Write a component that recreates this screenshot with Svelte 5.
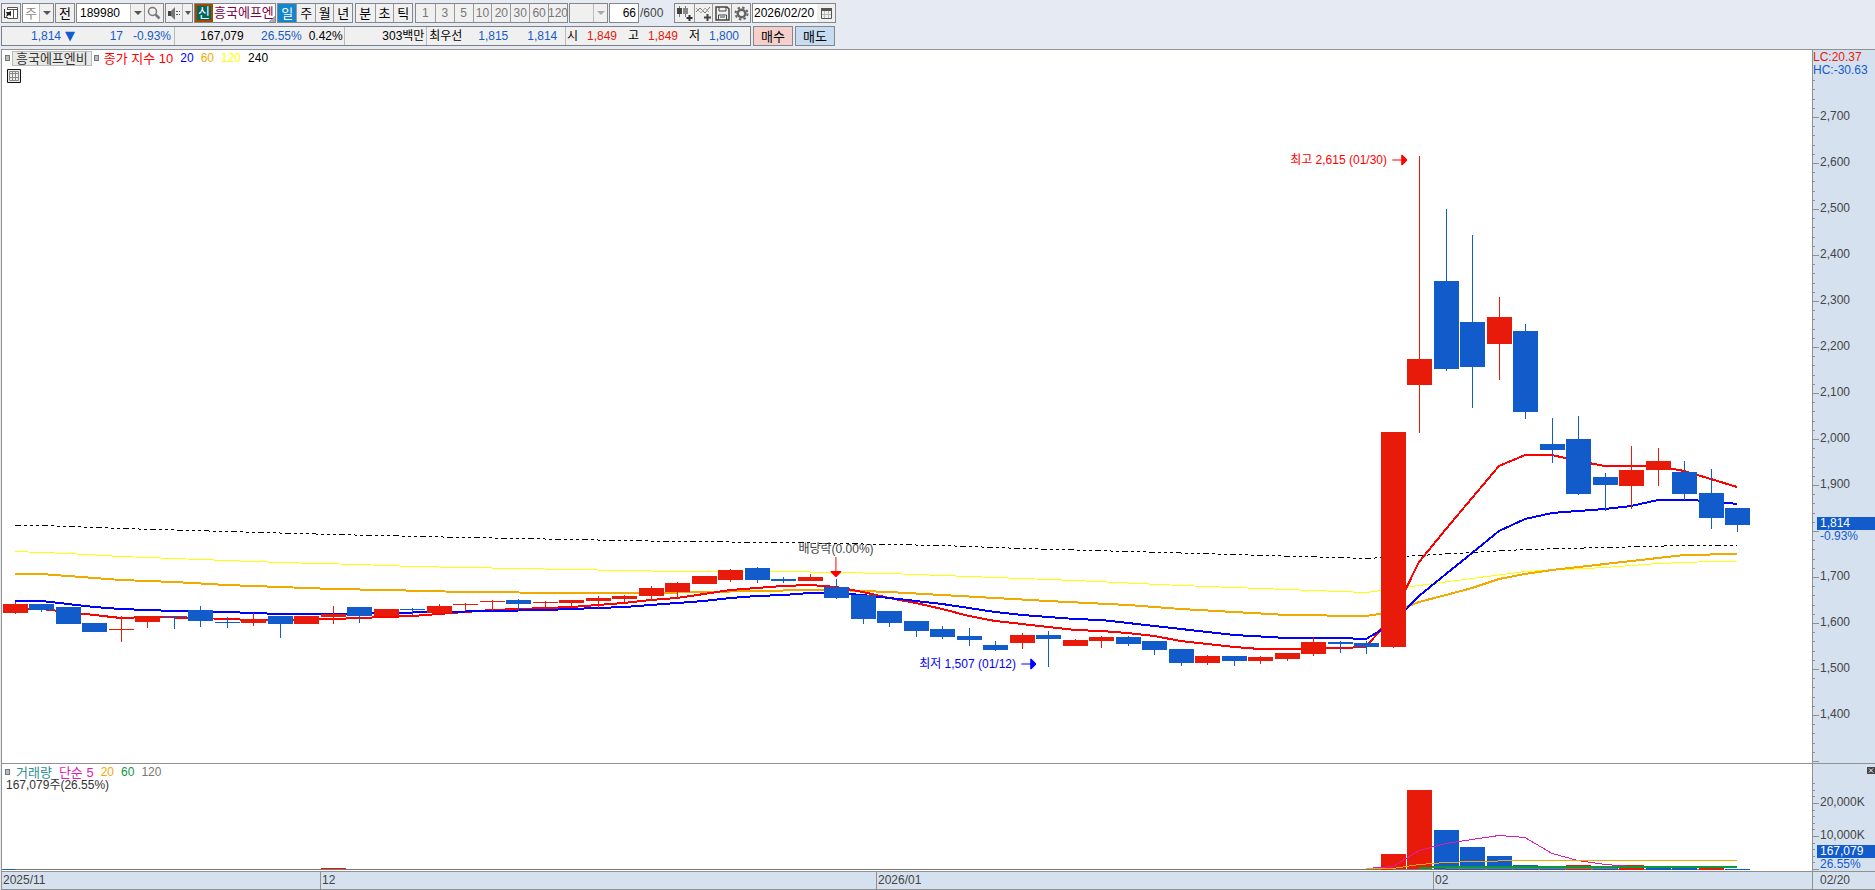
<script lang="ts">
	type Candle = [high: number, top: number, bottom: number, low: number, up: 0 | 1];
	type Point = [index: number, y: number];

	// plot area in drawing units
	const PLOT = { x: 2, width: 1810 };
	const PRICE = { y: 50, height: 713 };
	const VOLUME = { y: 764, height: 107 };
	const STEP = 26.5;

	const candles: Candle[] = [
		[602, 604, 613, 614, 1], [604, 604, 610, 612, 0], [607, 607, 624, 624, 0], [623, 623, 632, 632, 0],
		[616, 629, 630, 642, 1], [616, 616, 622, 628, 1], [616, 616, 617, 629, 0], [606, 610, 621, 627, 0],
		[617, 622, 623, 628, 0], [613, 619, 623, 626, 1], [616, 616, 624, 638, 0], [616, 616, 624, 624, 1],
		[606, 614, 617, 624, 1], [607, 607, 616, 623, 0], [609, 609, 616, 616, 1], [608, 609, 610, 615, 0],
		[604, 606, 613, 613, 1], [603, 604, 605, 611, 1], [600, 601, 602, 611, 1], [599, 600, 604, 610, 0],
		[601, 602, 603, 608, 1], [600, 600, 603, 606, 1], [596, 598, 601, 608, 1], [595, 596, 599, 603, 1],
		[586, 588, 596, 600, 1], [582, 583, 592, 598, 1], [576, 576, 584, 584, 1], [569, 570, 580, 582, 1],
		[567, 568, 580, 583, 0], [577, 579, 581, 583, 0], [574, 577, 581, 581, 1], [579, 587, 598, 599, 0],
		[595, 595, 619, 624, 0], [611, 611, 623, 627, 0], [621, 621, 631, 637, 0], [626, 629, 637, 639, 0],
		[628, 636, 640, 646, 0], [641, 645, 650, 651, 0], [633, 635, 643, 649, 1], [631, 635, 639, 667, 0],
		[639, 640, 646, 646, 1], [636, 637, 641, 648, 1], [636, 637, 644, 646, 0], [641, 641, 650, 655, 0],
		[649, 649, 663, 666, 0], [655, 656, 663, 665, 1], [656, 656, 661, 666, 0], [656, 657, 661, 664, 1],
		[653, 653, 659, 661, 1], [637, 642, 654, 656, 1], [641, 642, 644, 653, 0], [641, 643, 647, 654, 0],
		[432, 432, 647, 648, 1], [156, 359, 385, 433, 1], [209, 281, 369, 371, 0], [235, 322, 367, 408, 0],
		[297, 317, 344, 380, 1], [324, 331, 412, 419, 0], [418, 444, 450, 463, 0], [416, 439, 494, 495, 0],
		[473, 477, 485, 511, 0], [446, 470, 486, 509, 1], [448, 461, 470, 486, 1], [461, 472, 494, 500, 0],
		[469, 493, 518, 529, 0], [508, 508, 525, 532, 0]
	];

	// 이동평균선
	const ma10: Point[] = [
		[0, 608], [1, 609], [2, 612], [3, 615], [4, 618], [5, 617], [7, 618], [9, 620], [11, 620], [12, 619],
		[13, 618], [14, 617], [15, 616], [16, 614], [17, 612], [18, 610], [20, 608], [21, 607], [22, 605],
		[23, 603], [24, 600], [25, 598], [26, 594], [27, 590], [28, 588], [29, 586], [30, 585], [31, 587],
		[32, 592], [33, 598], [34, 603], [35, 609], [36, 616], [37, 621], [38, 624], [39, 627], [40, 630],
		[41, 631], [42, 633], [43, 636], [44, 641], [45, 644], [46, 647], [47, 649], [49, 649], [50, 648],
		[51, 647], [52, 615], [53, 562], [54, 529], [55, 498], [56, 466], [57, 455], [58, 455], [59, 461],
		[60, 466], [62, 466], [63, 471], [64, 479], [65, 487]
	];
	const ma20: Point[] = [
		[0, 601], [1, 601], [2, 604], [3, 607], [4, 609], [5, 610], [6, 611], [8, 612], [10, 614], [12, 614],
		[14, 613], [16, 612], [18, 611], [20, 610], [21, 609], [22, 608], [23, 607], [24, 605], [25, 603],
		[26, 601], [27, 598], [28, 596], [29, 595], [30, 593], [31, 593], [32, 595], [33, 598], [34, 601],
		[35, 604], [36, 608], [37, 612], [38, 615], [40, 619], [41, 620], [42, 623], [44, 629], [46, 635],
		[48, 638], [50, 638], [51, 639], [52, 623], [53, 596], [54, 574], [55, 553], [56, 531], [57, 519],
		[58, 513], [59, 511], [60, 509], [61, 506], [62, 500], [63, 500], [64, 501], [65, 504]
	];
	const ma60: Point[] = [
		[0, 574], [1, 574], [2, 576], [4, 580], [6, 582], [8, 585], [10, 587], [12, 589], [14, 590], [17, 592],
		[21, 593], [24, 593], [26, 592], [28, 591], [30, 590], [31, 590], [33, 592], [35, 595], [37, 598],
		[39, 601], [42, 605], [44, 609], [46, 612], [48, 615], [51, 616], [52, 612], [53, 602], [54, 595],
		[55, 588], [56, 579], [57, 574], [58, 570], [60, 564], [62, 558], [63, 555], [65, 554]
	];
	const ma120: Point[] = [
		[0, 551], [2, 553], [4, 556], [6, 558], [8, 560], [10, 562], [13, 564], [15, 566], [19, 568], [23, 570],
		[25, 571], [29, 571], [33, 573], [36, 576], [40, 580], [44, 585], [48, 589], [51, 592], [53, 585],
		[55, 578], [57, 571], [60, 567], [62, 563], [64, 561], [65, 561]
	];
	const ma240: Point[] = [
		[0, 525], [1, 525], [4, 528], [8, 531], [12, 534], [17, 537], [25, 541], [29, 542], [31, 543],
		[35, 545], [38, 548], [42, 551], [46, 554], [51, 558], [53, 555], [55, 552], [57, 549], [60, 547],
		[63, 545], [65, 545]
	];
	const priceLines = [
		{ name: 'ma240', points: ma240, width: 1 },
		{ name: 'ma120', points: ma120, width: 1 },
		{ name: 'ma60', points: ma60, width: 2 },
		{ name: 'ma10', points: ma10, width: 2 },
		{ name: 'ma20', points: ma20, width: 2 }
	];

	// 거래량
	const volumes = [
		{ index: 52, top: 854, up: true },
		{ index: 53, top: 790, up: true },
		{ index: 54, top: 830, up: false },
		{ index: 55, top: 847, up: false },
		{ index: 56, top: 856, up: false },
		{ index: 57, top: 865, up: false },
		{ index: 58, top: 867, up: false },
		{ index: 59, top: 865, up: true },
		{ index: 60, top: 867, up: false },
		{ index: 61, top: 865, up: true },
		{ index: 62, top: 867, up: false },
		{ index: 63, top: 867, up: false },
		{ index: 64, top: 867, up: true },
		{ index: 65, top: 869, up: false }
	];
	const volumeLines: { name: string; points: Point[]; width: number }[] = [
		{
			name: 'vol5',
			points: [[51, 868], [52, 866], [53, 850], [54, 843], [55, 839], [56, 835], [57, 837], [58, 853], [59, 860], [60, 864], [61, 866], [65, 867]],
			width: 1
		},
		{ name: 'vol20', points: [[51, 868], [52, 868], [53, 864], [54, 862], [55, 861], [57, 860], [65, 860]], width: 1 },
		{ name: 'vol120', points: [[52, 869], [56, 868], [65, 867]], width: 1 },
		{ name: 'vol60', points: [[53, 868], [54, 867], [55, 867], [65, 867]], width: 2 }
	];

	const centerX = (index: number) => Math.floor(15.3 + index * STEP);
	const priceY = (price: number) => 163 + (2600 - price) * 0.46;
	const volumeY = (k: number) => 869 - k * 0.0033;
	// odd widths sit on the pixel centre
	const toPoints = (points: Point[], width: number) =>
		points.map(([i, y]) => `${centerX(i)},${y + (width % 2) / 2}`).join(' ');

	const left = (x: number) => `${((x - PLOT.x) / PLOT.width) * 100}%`;
	const top = (y: number, pane = PRICE) => `${((y - pane.y) / pane.height) * 100}%`;

	const priceLabels = Array.from({ length: 14 }, (_, i) => 2700 - i * 100).filter((p) => p !== 1800);
	const priceTicks = Array.from({ length: 75 }, (_, i) => 2780 - i * 20);
	const volumeTicks = Array.from({ length: 14 }, (_, i) => i * 2000);
	const volumeLabels = [20000, 10000];

	const periods = ['일', '주', '월', '년'];
	const intradays = ['분', '초', '틱'];
	const minutes = ['1', '3', '5', '10', '20', '30', '60', '120'];
	let period = '일';

	const months = [
		{ text: '2025/11', x: 2 },
		{ text: '12', x: 320 },
		{ text: '2026/01', x: 876 },
		{ text: '02', x: 1433 }
	];
</script>

<div class="page">
	<header>
		<div class="toolbar">
			<button type="button" class="box square" aria-label="메뉴">
				<svg width="16" height="16" viewBox="0 0 16 16">
					<path d="M4 2h11v12H4z" fill="#fff" />
					<path d="M4.500 5V2.500h10v11h-10V12M5 4.500h9.500M10.500 5v8.500" fill="none" stroke="#555" />
					<path d="M1.500 4v8M1 12.500h3" stroke="#333" fill="none" />
					<path d="M3 12l1-3-1-2h3l2-1v5l-2-1z" fill="#222" />
				</svg>
			</button>
			<div class="group">
				<select class="light" aria-label="주기 선택">
					<option>주</option>
				</select>
				<span class="drop"><i class="caret"></i></span>
			</div>
			<button type="button" class="box square">전</button>
			<div class="group code">
				<input type="text" value="189980" aria-label="종목코드" />
				<button type="button" class="drop" aria-label="종목 목록"><i class="caret"></i></button>
				<button type="button" aria-label="검색">
					<svg width="16" height="16" viewBox="0 0 16 16" fill="none" stroke="#777">
						<circle cx="6.500" cy="6.500" r="4" stroke-width="1.500" />
						<path d="M9.500 9.500l4 4" stroke-width="2.500" />
					</svg>
				</button>
			</div>
			<div class="group">
				<button type="button" class="sound" aria-label="소리">
					<svg width="16" height="16" viewBox="0 0 16 16">
						<path d="M2 6h3v5H2z" fill="#444" />
						<path d="M5 6l4-4v13l-4-4z" fill="#777" />
						<path d="M10 6.500h4M10 9.500h4" stroke="#555" stroke-dasharray="2 1" />
					</svg>
				</button>
				<button type="button" class="drop slim" aria-label="소리 설정"><i class="caret"></i></button>
			</div>
			<div class="group name">
				<span class="credit">신</span>
				<span class="stock">흥국에프엔</span>
			</div>
			<div class="group periods">
				{#each periods as p (p)}
					<button type="button" class:selected={period === p} on:click={() => (period = p)}>{p}</button>
				{/each}
			</div>
			<div class="group intradays">
				{#each intradays as p (p)}
					<button type="button" class:selected={period === p} on:click={() => (period = p)}>{p}</button>
				{/each}
			</div>
			<div class="group minutes">
				{#each minutes as m (m)}
					<button type="button" disabled>{m}</button>
				{/each}
			</div>
			<div class="group empty">
				<select class="blank" disabled aria-label="주기 값"></select>
				<span class="drop"><i class="caret"></i></span>
			</div>
			<div class="count">
				<input type="text" value="66" aria-label="표시 개수" />
				<span>/600</span>
			</div>
			<div class="group tools">
				<button type="button" aria-label="지표 추가">
					<svg width="17" height="17" viewBox="0 0 17 17">
						<path d="M3.500 1v11M9.500 1v11" stroke="#777" />
						<path d="M1 3h5v6H1z" fill="#444" />
						<path d="M7 3h5v6H7z" fill="#888" />
						<path d="M13.500 10v6M10.500 13h6" stroke="#333" stroke-width="2" />
					</svg>
				</button>
				<button type="button" aria-label="선 추가">
					<svg width="17" height="17" viewBox="0 0 17 17" fill="none">
						<path d="M1 7l4-4 5 5 5-6" stroke="#777" />
						<path d="M1 3l5 5 4-5 4 4" stroke="#aaa" />
						<path d="M12.500 9v7M9 12.500h7" stroke="#444" stroke-width="2" />
					</svg>
				</button>
				<button type="button" aria-label="저장">
					<svg width="17" height="17" viewBox="0 0 17 17" fill="none" stroke="#444">
						<path d="M2 2h11l2 2v11H2z" stroke-width="1.500" />
						<path d="M5 2v4h7V2M4.500 15v-5h8v5M6 12h5" />
					</svg>
				</button>
				<button type="button" aria-label="설정">
					<svg width="17" height="17" viewBox="0 0 17 17" fill="none" stroke="#666">
						<circle cx="8.500" cy="8.500" r="3.800" stroke-width="2.500" />
						<circle cx="8.500" cy="8.500" r="6" stroke-width="2" stroke-dasharray="2.400 2.310" />
					</svg>
				</button>
			</div>
			<div class="group date">
				<input type="text" value="2026/02/20" aria-label="날짜" />
				<button type="button" class="cal" aria-label="달력">
					<svg width="13" height="13" viewBox="0 0 13 13" fill="none" stroke="#555">
						<path d="M1 2.500h11" stroke-width="3" />
						<path d="M4.500 4v7M8.500 4v7M2 7.500h9" stroke="#bbb" />
						<path d="M1.500 3v8.500h10V3" />
					</svg>
				</button>
			</div>
		</div>

		<div class="quote">
			<div class="prices">
				<div class="cells first">
					<span class="down">1,814</span><span class="down mark">▼</span><span class="down diff">17</span>
					<span class="down rate">-0.93%</span>
				</div>
				<div class="cells second">
					<span>167,079</span><span class="down">26.55%</span><span>0.42%</span>
				</div>
				<div class="cells third"><span>303백만</span></div>
				<div class="cells fourth"><b>최우선</b><span class="down">1,815</span><span class="down">1,814</span></div>
				<div class="cells fifth">
					<b>시</b><span class="up">1,849</span><b>고</b><span class="up">1,849</span><b>저</b><span
						class="down">1,800</span
					>
				</div>
			</div>
			<button type="button" class="trade buy">매수</button>
			<button type="button" class="trade sell">매도</button>
		</div>
	</header>

	<main>
		<section class="plot">
			<svg class="drawing" viewBox="2 50 1810 713" preserveAspectRatio="none" aria-label="가격 차트">
				{#each priceLines as line (line.name)}
					<polyline class={line.name} points={toPoints(line.points, line.width)} />
				{/each}
				{#each candles as [high, bodyTop, bodyBottom, low, up], i (i)}
					<g class={up ? 'rise' : 'fall'}>
						<rect x={centerX(i)} y={high} width="1" height={low - high} />
						<rect x={centerX(i) - 12} y={bodyTop} width="25" height={bodyBottom - bodyTop} />
					</g>
				{/each}
			</svg>
			<div class="legend">
				<i class="dot"></i><span class="chip">흥국에프엔비</span><i class="dot"></i>
				<span class="c10">종가 지수 10</span><span class="c20">20</span><span class="c60">60</span>
				<span class="c120">120</span><span>240</span>
			</div>
			<button type="button" class="grid-icon" aria-label="표 보기">
				<svg width="14" height="14" viewBox="0 0 14 14" fill="none">
					<path d="M.5.5h13v13H.5z" fill="#eee" stroke="#111" />
					<path d="M2.500 2.500h9v9h-9zM5.500 2v10M8.500 2v10M2 4.500h10M2 8.500h10" stroke="#888" />
				</svg>
			</button>
			<div class="note high" style:left={left(1407)} style:top={top(160)}>
				<span>최고 2,615 (01/30)</span>
				<svg width="15" height="11" viewBox="0 0 15 11"><path d="M0 5h9V0h1l5 5v1l-5 5H9V6H0z" /></svg>
			</div>
			<div class="note low" style:left={left(1036)} style:top={top(664)}>
				<span>최저 1,507 (01/12)</span>
				<svg width="15" height="11" viewBox="0 0 15 11"><path d="M0 5h9V0h1l5 5v1l-5 5H9V6H0z" /></svg>
			</div>
			<div class="note event" style:left={left(836)} style:top={top(543)}>
				<span>배당락(0.00%)</span>
				<svg width="11" height="20" viewBox="0 0 11 20"><path d="M5 0h1v14h5v1l-5 5H5l-5-5v-1h5z" /></svg>
			</div>
		</section>
		<aside class="axis">
			{#each priceTicks as p (p)}
				<i class="tick" class:major={p % 100 === 0} style:top={top(priceY(p))}></i>
			{/each}
			{#each priceLabels as p (p)}
				<span class="label" style:top={top(priceY(p) - 1)}>{p.toLocaleString('en-US')}</span>
			{/each}
			<div class="extremes"><span class="up">LC:20.37</span><span class="down">HC:-30.63</span></div>
			<div class="current" style:top={top(517)}><span>1,814</span><span class="down">-0.93%</span></div>
		</aside>

		<section class="plot">
			<svg class="drawing" viewBox="2 764 1810 107" preserveAspectRatio="none" aria-label="거래량 차트">
				<rect x="2" y="869" width="1720" height="1" fill="#777" />
				<rect class="fall" x="3" y="869" width="12" height="1" />
				<rect class="rise" x="321" y="868" width="25" height="1" />
				{#each volumes as v (v.index)}
					<rect class={v.up ? 'rise' : 'fall'} x={centerX(v.index) - 12} y={v.top} width="25" height={870 - v.top} />
				{/each}
				{#each volumeLines as line (line.name)}
					<polyline class={line.name} points={toPoints(line.points, line.width)} />
				{/each}
			</svg>
			<div class="legend volume">
				<i class="dot"></i><span class="v-title">거래량</span><span class="v5">단순 5</span>
				<span class="c60">20</span><span class="v60">60</span><span class="v120">120</span>
			</div>
			<div class="amount">167,079주(26.55%)</div>
		</section>
		<aside class="axis">
			{#each volumeTicks as k (k)}
				<i class="tick" class:major={k % 10000 === 0} style:top={top(volumeY(k), VOLUME)}></i>
			{/each}
			{#each volumeLabels as k (k)}
				<span class="label" style:top={top(volumeY(k) - 1, VOLUME)}>{k.toLocaleString('en-US')}K</span>
			{/each}
			<button type="button" class="close" aria-label="닫기">
				<svg width="8" height="7" viewBox="0 0 8 7"><path d="M2 1.500l4 4M6 1.500l-4 4" stroke="#fff" /></svg>
			</button>
			<div class="current" style:top={top(845, VOLUME)}><span>167,079</span><span class="down">26.55%</span></div>
		</aside>

		<section class="dates">
			{#each months as m, i (m.text)}
				<span class:line={i > 0} style:left={left(m.x)}>{m.text}</span>
			{/each}
		</section>
		<aside class="last-date">02/20</aside>
	</main>
</div>

<style>
	:global(body) {
		background: #e6ebf3;
	}
	.page {
		display: flex;
		flex-direction: column;
		height: 100vh;
		min-height: 500px;
		font-family: 'Liberation Sans', 'Noto Sans CJK KR', sans-serif;
		font-size: 12px;
		line-height: 13px;
		color: #000;
		white-space: nowrap;
		overflow: hidden;
	}
	button,
	input,
	select {
		box-sizing: border-box;
		margin: 0;
		padding: 0;
		border: none;
		border-radius: 0;
		background: #f0f0f0;
		font: inherit;
		color: inherit;
	}
	select {
		appearance: none;
	}
	svg {
		display: block;
		flex: none;
	}
	.up {
		color: #e81a0a;
	}
	.down {
		color: #125bcb;
	}

	/* 상단 툴바 */
	header {
		display: flex;
		flex-direction: column;
		gap: 3px;
		height: 46px;
		padding: 3px 0 0 1px;
	}
	.toolbar {
		display: flex;
		gap: 1px;
		height: 20px;
	}
	.box,
	.group {
		box-sizing: border-box;
		display: flex;
		height: 20px;
		border: 1px solid #858789;
		background: #f0f0f0;
	}
	.square {
		align-items: center;
		justify-content: center;
		width: 20px;
		font-size: 13px;
	}
	.group button,
	.drop {
		box-sizing: border-box;
		display: flex;
		align-items: center;
		justify-content: center;
		width: 19px;
	}
	.group button + button {
		border-left: 1px solid #999;
	}
	.group .drop {
		width: 14px;
		border-left: 1px solid #bbb;
	}
	.group .slim {
		width: 10px;
	}
	.light {
		width: 16px;
		padding-left: 2px;
		background: #fff;
		color: #888;
		font-size: 13px;
	}
	.group .sound {
		width: 16px;
	}
	.caret {
		border: 4px solid transparent;
		border-top: 4px solid #555;
		border-bottom: none;
	}
	.slim .caret {
		border-width: 4px 3px 0;
	}
	.group .selected {
		background: #1685c9;
		color: #fff;
	}
	.code input {
		width: 53px;
		padding-left: 3px;
		background: #fff;
	}
	.name {
		width: 82px;
		background: linear-gradient(135deg, #fff 93%, #aaa 93%);
		color: #80004a;
		font-size: 13px;
		overflow: hidden;
	}
	.credit {
		box-sizing: border-box;
		flex: none;
		width: 18px;
		border: 2px solid #a04a00;
		background: #06655f;
		color: #fff;
		line-height: 14px;
		text-align: center;
	}
	.stock {
		padding-left: 1px;
		line-height: 18px;
	}
	.periods {
		width: 76px;
		font-size: 13px;
	}
	.intradays {
		width: 58px;
		margin: 0 1px;
		font-size: 13px;
	}
	.minutes {
		width: 153px;
	}
	.minutes button {
		color: #777;
	}
	.blank {
		width: 23px;
	}
	.empty .caret {
		border-top-color: #aaa;
	}
	.count {
		display: flex;
		align-items: center;
		gap: 1px;
		width: 64px;
		color: #444;
	}
	.count input {
		width: 30px;
		height: 20px;
		padding-right: 2px;
		border: 1px solid #858789;
		background: #fff;
		color: #000;
		text-align: right;
	}
	.tools {
		width: 77px;
	}
	.date input {
		width: 64px;
		padding-left: 1px;
		background: #fff;
	}
	.group .cal {
		width: 18px;
	}

	/* 시세 줄 */
	.quote {
		display: flex;
		gap: 2px;
		height: 20px;
	}
	.prices {
		box-sizing: border-box;
		display: flex;
		width: 750px;
		border: 1px solid #7b7f88;
		background: #f0f0f0;
		line-height: 18px;
	}
	.cells {
		box-sizing: border-box;
		display: flex;
		text-align: right;
	}
	.cells + .cells {
		border-left: 1px solid #bbb;
	}
	.cells b {
		font-weight: normal;
		text-align: left;
	}
	.first {
		width: 172px;
	}
	.first span {
		width: 59px;
	}
	.first .mark {
		width: 14px;
		font-family: 'DejaVu Sans', sans-serif;
		font-size: 13px;
	}
	.first .diff,
	.first .rate {
		width: 48px;
	}
	.second {
		width: 171px;
	}
	.second span {
		width: 69px;
	}
	.second span + span {
		width: 58px;
	}
	.second span + span + span {
		width: 41px;
	}
	.third {
		width: 82px;
	}
	.third span {
		width: 79px;
	}
	.fourth {
		width: 139px;
		padding-left: 2px;
	}
	.fourth b {
		width: 30px;
	}
	.fourth span {
		width: 49px;
	}
	.fifth {
		padding-left: 1px;
	}
	.fifth b {
		width: 20px;
	}
	.fifth span {
		width: 30px;
		margin-right: 11px;
	}
	.trade {
		box-sizing: border-box;
		width: 40px;
		border: 1px solid #858789;
		font-size: 13px;
	}
	.buy {
		background: #f5cfcb;
	}
	.sell {
		background: #c7dcf2;
	}

	/* 차트 */
	main {
		flex: 1;
		display: grid;
		grid-template-columns: 1fr 63px;
		grid-template-rows: minmax(0, 714fr) minmax(0, 108fr) 18px;
		margin-left: 1px;
		border-top: 1px solid #919191;
		border-left: 1px solid #919191;
	}
	.plot,
	.axis,
	.dates,
	.last-date {
		position: relative;
		box-sizing: border-box;
		border-bottom: 1px solid #919191;
	}
	.plot {
		background: #fff;
	}
	.axis,
	.dates,
	.last-date {
		background: #d6e1ef;
		color: #444;
	}
	.axis,
	.last-date {
		border-left: 1px solid #919191;
	}
	.drawing {
		position: absolute;
		width: 100%;
		height: 100%;
		shape-rendering: crispEdges;
	}
	polyline {
		fill: none;
		stroke-width: 1;
		vector-effect: non-scaling-stroke;
	}
	.rise {
		fill: #e81a0a;
	}
	.fall {
		fill: #125bcb;
	}
	.ma10 {
		stroke: #f00;
		stroke-width: 2;
	}
	.ma20 {
		stroke: #00f;
		stroke-width: 2;
	}
	.ma60 {
		stroke: #f0aa00;
		stroke-width: 2;
	}
	.ma120 {
		stroke: #ff0;
	}
	.ma240 {
		stroke: #000;
		stroke-dasharray: 6 3 3 3 3 3 3 3;
	}
	.vol5 {
		stroke: #e01bb4;
	}
	.vol20 {
		stroke: #f0aa00;
	}
	.vol60 {
		stroke: #0a9a3a;
		stroke-width: 2;
	}
	.vol120 {
		stroke: #777;
	}

	.legend {
		position: relative;
		display: flex;
		align-items: center;
		gap: 7px;
		height: 16px;
		padding-left: 3px;
	}
	.dot {
		box-sizing: border-box;
		width: 5px;
		height: 6px;
		margin-right: -5px;
		border: 1px solid #777;
		background: #bbb;
	}
	.chip {
		box-sizing: border-box;
		height: 15px;
		margin-right: -5px;
		padding: 0 3px;
		border: 1px solid #bbb;
		background: #e9e9e6;
		color: #333;
		font-size: 13px;
	}
	.c10 {
		margin-left: 3px;
		color: #f00;
		font-size: 13px;
	}
	.c20 {
		color: #00f;
	}
	.c60 {
		color: #f0aa00;
	}
	.c120 {
		color: #ff0;
	}
	.volume {
		height: 14px;
		padding-top: 1px;
	}
	.v-title {
		margin-left: 4px;
		color: #2c8f91;
		font-size: 13px;
	}
	.v5 {
		color: #e01bb4;
		font-size: 13px;
	}
	.v60 {
		color: #0a9a3a;
	}
	.v120 {
		color: #777;
	}
	.amount {
		position: relative;
		padding-left: 4px;
		color: #333;
	}
	.grid-icon {
		position: relative;
		display: block;
		margin: 3px 0 0 5px;
	}
	.note {
		position: absolute;
		display: flex;
		align-items: center;
		gap: 5px;
		transform: translate(-100%, -50%);
	}
	.high {
		color: #f00;
		fill: #f00;
	}
	.low {
		color: #00f;
		fill: #00f;
	}
	.event {
		flex-direction: column;
		gap: 1px;
		transform: translateX(-50%);
		color: #444;
		fill: #f00;
	}

	.tick {
		position: absolute;
		left: 0;
		width: 2px;
		height: 1px;
		background: #919191;
	}
	.major {
		width: 6px;
	}
	.label {
		position: absolute;
		left: 7px;
		transform: translateY(-50%);
	}
	.extremes {
		position: absolute;
		top: 1px;
		left: 0;
		display: grid;
	}
	.current {
		position: absolute;
		right: 0;
		left: 4px;
		display: grid;
	}
	.current span {
		padding-left: 3px;
		background: #125bcb;
		color: #fff;
	}
	.current .down {
		background: none;
		color: #125bcb;
	}
	.close {
		position: absolute;
		top: 3px;
		right: 0;
		background: #444;
	}
	.dates span {
		position: absolute;
		height: 17px;
		padding-left: 1px;
		line-height: 16px;
	}
	.dates .line {
		border-left: 1px solid #919191;
	}
	.last-date {
		padding-left: 7px;
		line-height: 16px;
	}
</style>
